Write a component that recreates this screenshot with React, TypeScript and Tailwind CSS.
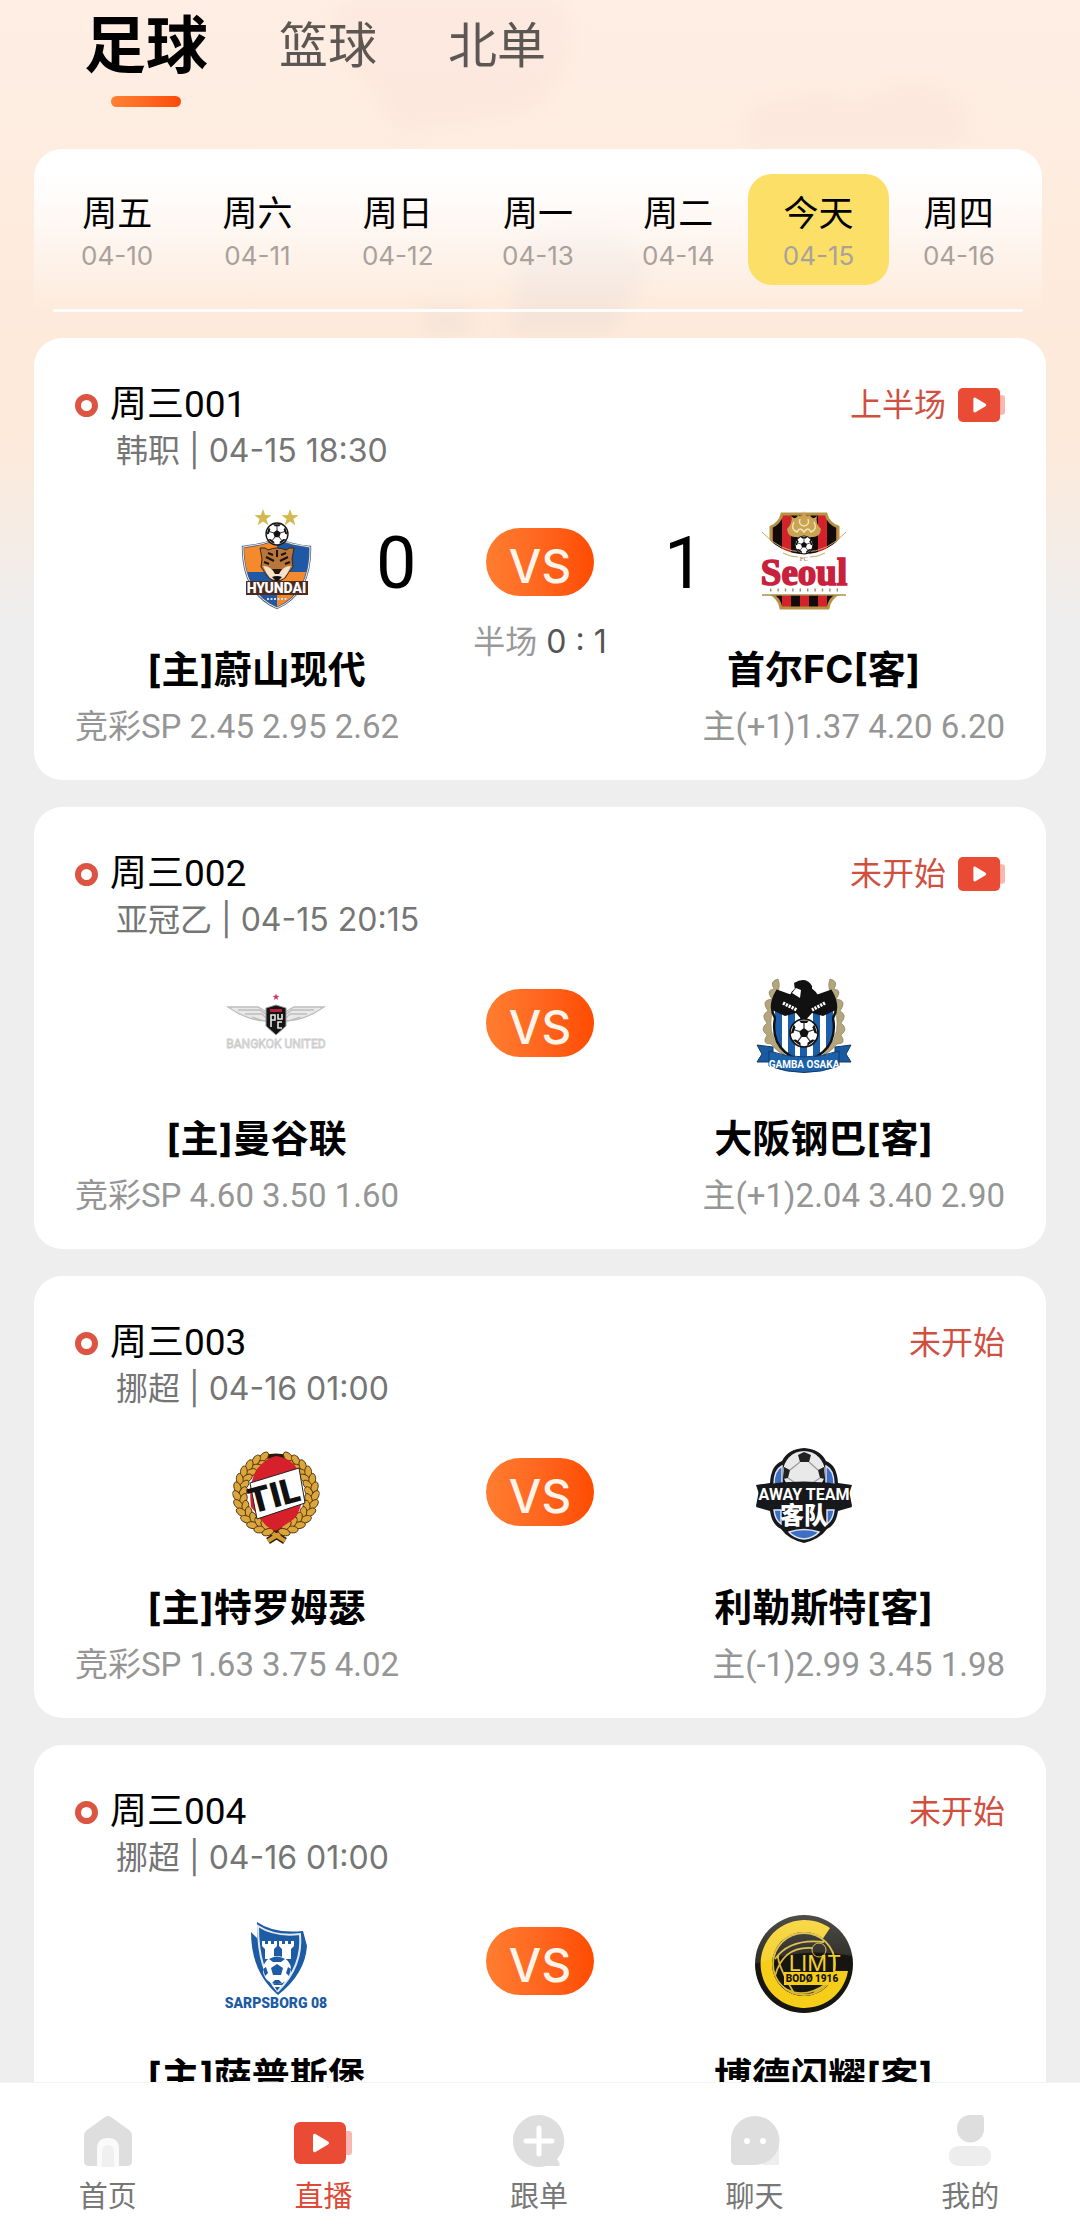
import React from "react";

const FONT = "font-['Roboto','Noto_Sans_CJK_SC',sans-serif]";

function Ball({ x, y, r }: { x: number; y: number; r: number }) {
  const angles = [-90, -18, 54, 126, 198];
  const pt = (a: number, d: number) =>
    `${x + Math.cos((a * Math.PI) / 180) * d},${y + Math.sin((a * Math.PI) / 180) * d}`;
  return (
    <g>
      <circle cx={x} cy={y} r={r} fill="#fff" stroke="#111" strokeWidth={r * 0.12} />
      <polygon points={angles.map((a) => pt(a, r * 0.36)).join(" ")} fill="#111" />
      {angles.map((a) => (
        <g key={a}>
          <polyline points={`${pt(a, r * 0.3)} ${pt(a, r * 0.75)}`} stroke="#333" strokeWidth={r * 0.09} />
          <polygon points={`${pt(a - 22, r * 0.96)} ${pt(a - 16, r * 0.74)} ${pt(a + 16, r * 0.74)} ${pt(a + 22, r * 0.96)}`} fill="#111" />
        </g>
      ))}
    </g>
  );
}

function Star({ x, y, r, fill }: { x: number; y: number; r: number; fill: string }) {
  const points = Array.from({ length: 10 }, (_, i) => {
    const d = i % 2 ? r * 0.4 : r;
    const a = ((i * 36 - 90) * Math.PI) / 180;
    return `${x + Math.cos(a) * d},${y + Math.sin(a) * d}`;
  }).join(" ");
  return <polygon points={points} fill={fill} />;
}

function Crest({ label, children }: { label: string; children: React.ReactNode }) {
  return (
    <svg viewBox="0 0 100 100" role="img" aria-label={label} className="size-[100px] shrink-0 overflow-visible">
      {children}
    </svg>
  );
}

function UlsanCrest() {
  const shield = "M17 38Q36 36 51 30Q66 36 84 38Q85 84 51 99Q17 84 17 38Z";
  return (
    <Crest label="蔚山现代">
      <clipPath id="ulsan">
        <path d={shield} />
      </clipPath>
      <Star x={37} y={9} r={9} fill="#d3b94f" />
      <Star x={64} y={9} r={9} fill="#d3b94f" />
      <g clipPath="url(#ulsan)">
        <rect x="15" y="28" width="36" height="35" fill="#f58a2c" />
        <rect x="51" y="28" width="36" height="35" fill="#1f59a5" />
        <rect x="15" y="63" width="36" height="38" fill="#1f59a5" />
        <rect x="51" y="63" width="36" height="38" fill="#f58a2c" />
      </g>
      <path d={shield} fill="none" stroke="#4a5c78" strokeWidth="2.4" />
      <path d={shield} fill="none" stroke="#e9edf2" strokeWidth="1" />
      <Ball x={51} y={25} r={11} />
      <path d="M34 39Q40 38 42 41Q51 37 60 41Q63 38 68 39L66 50L67 58Q62 64 59 69Q51 75 43 69Q39 64 35 58L36 50Z" fill="#b9763a" stroke="#3a2413" strokeWidth="1" />
      <path d="M37 57Q43 57 46 61L51 64L56 61Q59 57 65 57Q62 64 58 69Q51 73 44 69Q40 64 37 57Z" fill="#f4e3ca" />
      <path d="M40 48L48 52M62 48L54 52M42 44L47 46M60 44L55 46M51 41V48M38 53L43 55M64 53L59 55" stroke="#1c120b" strokeWidth="2" />
      <path d="M46 60H56L53 65H49Z" fill="#29170e" />
      <path d="M46 68Q51 66 56 68L51 73Z" fill="#111" />
      <path d="M20 72H82V86H20Z" fill="#4b2a20" />
      <text x="50.5" y="84" textAnchor="middle" fontSize="14" fontWeight="900" fill="#fff" className="font-['Roboto',sans-serif]">HYUNDAI</text>
      <path d="M41 90H61" stroke="#d7dce5" strokeWidth="2" strokeDasharray="2 1.5" />
    </Crest>
  );
}

function SeoulCrest() {
  const shield = "M28 5H72Q74 14 84 18V85Q76 89 74 99H27Q25 89 17 85V18Q26 14 28 5Z";
  return (
    <Crest label="首尔FC">
      <clipPath id="seoul">
        <path d={shield} />
      </clipPath>
      <g clipPath="url(#seoul)">
        <rect x="15" y="4" width="72" height="96" fill="#d3222a" />
        {[19, 37, 55, 73].map((x) => (
          <rect key={x} x={x} y="4" width="9" height="96" fill="#130b0b" />
        ))}
      </g>
      <path d={shield} fill="none" stroke="#b59445" strokeWidth="3" />
      <path d="M37 7Q42 12 44 6Q48 10 50 2Q52 10 56 6Q58 12 63 7Q61 14 67 20Q66 29 57 28L50 32L43 28Q34 29 33 20Q39 14 37 7Z" fill="#c9a452" />
      <path d="M40 13Q36 20 43 23Q46 17 50 23Q54 17 57 23Q64 20 60 13M46 10Q44 16 50 17Q56 16 54 10" fill="none" stroke="#f4e5bb" strokeWidth="1.4" />
      <path d="M8 23Q26 45 50 45Q74 45 92 23V86H8Z" fill="#fff" />
      <path d="M8 23Q26 43 50 43Q74 43 92 23" fill="none" stroke="#c6a85e" strokeWidth="1" />
      <Ball x={50} y={36} r={9} />
      <path d="M29 44Q36 48 44 48M56 48Q64 48 71 44" fill="none" stroke="#c6a85e" strokeWidth="1" />
      <text x="50" y="52" textAnchor="middle" fontSize="7" fill="#8d7336" className="font-['Liberation_Serif',serif]">FC</text>
      <text x="50" y="76" textAnchor="middle" fontSize="37" fontWeight="700" fill="#c9203c" stroke="#c9203c" strokeWidth="1.6" className="font-['Liberation_Serif',serif]">Seoul</text>
      <path d="M16 81H86" stroke="#9a8b60" strokeWidth="3" strokeDasharray="1.4 6" />
      <path d="M8 86H92" stroke="#a89152" strokeWidth="1.6" />
    </Crest>
  );
}

function BangkokCrest() {
  const wing = "M40 43Q20 42 2 29H32L41 34M12 32H34L41 37M19 36H36L41 41M26 39L41 44";
  return (
    <Crest label="曼谷联">
      <Star x={50} y={19} r={3.6} fill="#d6355a" />
      <path d={wing} fill="#e8e8e8" stroke="#bdbdbd" strokeWidth="1.3" />
      <path d={wing} transform="translate(100 0) scale(-1 1)" fill="#e8e8e8" stroke="#bdbdbd" strokeWidth="1.3" />
      <path d="M40 30L50 27L60 30V48L50 57L40 48Z" fill="#151515" stroke="#999" strokeWidth="1" />
      <path d="M44 31H56V34H44Z" fill="#b91f3b" />
      <path d="M45 49V37H49V42H45M52 36V41H56V36M56 44H52V50H56" fill="none" stroke="#e8e8e8" strokeWidth="1.6" />
      <text x="50" y="70" textAnchor="middle" fontSize="12" fill="#f4f4f4" stroke="#cccccc" strokeWidth="0.8" className="font-['Roboto',sans-serif]">BANGKOK UNITED</text>
    </Crest>
  );
}

function GambaCrest() {
  const shield = "M23 13L37 18Q40 9 50 10Q58 9 63 18L77 13Q86 28 79 40Q83 62 69 74L50 88L31 74Q17 62 21 40Q14 28 23 13Z";
  const laurel = "M24 1Q15 3 20 11Q11 12 18 21Q6 22 14 33Q6 37 13 45Q5 51 13 57Q7 66 17 66Q23 74 32 78L24 68Q14 54 18 35Q19 23 23 16Q27 8 24 1Z";
  return (
    <Crest label="大阪钢巴">
      <clipPath id="gamba">
        <path d={shield} />
      </clipPath>
      <path d={laurel} fill="#b3a67d" stroke="#857a58" strokeWidth="0.6" />
      <path d={laurel} transform="translate(100 0) scale(-1 1)" fill="#b3a67d" stroke="#857a58" strokeWidth="0.6" />
      <g clipPath="url(#gamba)">
        <rect x="14" y="8" width="72" height="82" fill="#fff" />
        {[21, 34, 46, 59, 72].map((x) => (
          <rect key={x} x={x} y="30" width="7" height="60" fill="#1b5ea9" />
        ))}
        <path d="M14 8H86V30L69 38L58 35L50 44L42 35L31 38L14 30Z" fill="#111" />
      </g>
      <path d={shield} fill="none" stroke="#111" strokeWidth="2.4" />
      <path d="M40 5Q52 -2 58 8V24L53 34L47 22Q50 15 47 11L41 12Z" fill="#111" />
      <path d="M38 15L42 10L47 12L46 20Z" fill="#fff" />
      <path d="M29 25L43 32M71 25L58 32" stroke="#fff" strokeWidth="3.4" strokeDasharray="2.2 1" />
      <Ball x={50} y={55} r={14} />
      <path d="M3 67L19 69V84H3L8 76ZM97 67L81 69V84H97L92 76Z" fill="#1a5aa0" stroke="#123a68" strokeWidth="1" />
      <path d="M15 73Q50 85 85 73V88Q50 101 15 88Z" fill="#1b62ab" stroke="#123a68" strokeWidth="1" />
      <text x="50" y="90" textAnchor="middle" fontSize="10" fontWeight="700" fill="#fff" className="font-['Roboto',sans-serif]">GAMBA OSAKA</text>
    </Crest>
  );
}

function TromsoCrest() {
  const leaves = Array.from({ length: 26 }, (_, i) => -78 + i * 6.24);
  return (
    <Crest label="特罗姆瑟">
      <circle cx="50" cy="47" r="36" fill="none" stroke="#2a1d08" strokeWidth="9" />
      <path d="M40 82L59 94M61 82L42 94" stroke="#2a1d08" strokeWidth="7" />
      <path d="M40 82L59 94M61 82L42 94" stroke="#d39b32" strokeWidth="4" />
      {leaves.map((a, i) => (
        <g key={a}>
          <ellipse cx="0" cy="0" rx="3.4" ry="6" fill="#dda63c" stroke="#4a330d" strokeWidth="0.9" transform={`rotate(${a} 50 47) translate(${i % 2 ? 89 : 83} 47) rotate(${i % 2 ? 28 : -28})`} />
          <ellipse cx="0" cy="0" rx="3.4" ry="6" fill="#dda63c" stroke="#4a330d" strokeWidth="0.9" transform={`rotate(${-a} 50 47) translate(${i % 2 ? 11 : 17} 47) rotate(${i % 2 ? -28 : 28})`} />
        </g>
      ))}
      <path d="M50 9Q66 11 73 25L77 46Q75 70 62 76L50 84Q40 81 35 72L25 60Q22 36 31 22Q40 11 50 9Z" fill="#d6212c" />
      <path d="M24 36L73 21L79 56L31 72Z" fill="#fff" stroke="#222" strokeWidth="1" />
      <g transform="translate(51 60) rotate(-15)">
        <text x="0" y="0" textAnchor="middle" fontSize="35" fontWeight="900" fill="#111" className="font-['Roboto',sans-serif]">TIL</text>
      </g>
    </Crest>
  );
}

function AwayCrest() {
  return (
    <Crest label="利勒斯特">
      <path d="M50 1Q66 2 72 14Q83 18 84 36L98 38L94 50L98 60L84 64Q82 78 73 82Q66 92 50 96Q34 92 27 82Q18 78 16 64L2 60L6 50L2 38L16 36Q17 18 28 14Q34 2 50 1Z" fill="#17181c" />
      <path d="M28 19Q20 23 20 37H28ZM72 19Q80 23 80 37H72ZM20 63Q21 73 27 77V63ZM80 63Q79 73 73 77V63ZM35 85Q50 80 65 85Q60 91 50 92Q40 91 35 85Z" fill="#3d6fc4" stroke="#dfe7f4" strokeWidth="1.4" />
      <circle cx="50" cy="25" r="21" fill="#e9e9e9" />
      <path d="M44 8L50 5L57 8L55 15H46ZM30 20L36 23L34 31L29 32ZM70 20L64 23L66 31L71 32ZM43 37L41 45H59L57 37Z" fill="#222" />
      <path d="M46 15L36 23M55 15L64 23M34 31L43 37L57 37L66 31" fill="none" stroke="#999" strokeWidth="1.2" />
      <path d="M6 38Q50 31 94 38L98 59Q50 49 2 59Z" fill="#17181c" />
      <text x="50" y="53" textAnchor="middle" fontSize="16" fontWeight="700" fill="#fff" className="font-['Roboto',sans-serif]">AWAY TEAM</text>
      <text x="50" y="77" textAnchor="middle" fontSize="24" fontWeight="900" fill="#fff" className="font-['Noto_Sans_CJK_SC',sans-serif]">客队</text>
    </Crest>
  );
}

function SarpsborgCrest() {
  return (
    <Crest label="萨普斯堡">
      <path d="M31 6Q48 18 77 15L81 30Q79 58 52 79Q25 56 25 16L31 22Z" fill="#1d5ba4" />
      <path d="M32 10Q49 21 74 18Q77 50 52 75Q32 55 32 10Z" fill="#1d5ba4" stroke="#dfe9f4" strokeWidth="2" />
      <path d="M36 25H39V28H42V25H45V28H48V25H51V30L48 33V43H39V33L36 30ZM53 25H56V28H59V25H62V28H65V25H68V30L65 33V43H56V33L53 30Z" fill="#fff" />
      <circle cx="51" cy="54" r="14" fill="#fff" />
      <path d="M51 48L57 52L55 59H47L45 52ZM43 43Q51 38 59 43L55 46H47ZM37 53L40 51L42 57L39 60ZM65 53L62 51L60 57L63 60ZM46 67L49 64H53L56 67Q51 69 46 67Z" fill="#1d5ba4" />
      <path d="M46 69H56L51 76Z" fill="#fff" />
      <path d="M49 71H54L51 75Z" fill="#1d5ba4" />
      <text x="50" y="92" textAnchor="middle" fontSize="14" fontWeight="900" fill="#1d5ba4" className="font-['Roboto',sans-serif]">SARPSBORG 08</text>
    </Crest>
  );
}

function BodoCrest() {
  return (
    <Crest label="博德闪耀">
      <defs>
        <linearGradient id="bodo-gloss" x1="0" y1="0" x2="0" y2="1">
          <stop offset="0" stopColor="#fff" stopOpacity="0.25" />
          <stop offset="1" stopColor="#fff" stopOpacity="0.1" />
        </linearGradient>
      </defs>
      <circle cx="50" cy="48" r="49" fill="#17150f" />
      <path d="M76 12A44 44 0 1 0 94 55H80A31 31 0 1 1 68 24Z" fill="#f6cd18" />
      <circle cx="50" cy="48" r="32" fill="#17150f" />
      <g fill="none" stroke="#d8b936" strokeWidth="1.8">
        <circle cx="50" cy="48" r="31" />
        <path d="M21 43Q36 22 70 26M21 60Q30 26 66 33M40 77Q24 50 24 40M60 77Q77 66 79 58M30 72Q50 84 72 68" />
      </g>
      <circle cx="65" cy="34" r="7" fill="#17150f" stroke="#d8b936" strokeWidth="1" />
      <text x="61" y="55" textAnchor="middle" fontSize="22" fill="#f0cf2e" className="font-['Inter',sans-serif]">LIMT</text>
      <rect x="30" y="56" width="57" height="13" fill="#f6cd18" />
      <text x="58" y="66" textAnchor="middle" fontSize="10" fontWeight="900" fill="#17150f" className="font-['Roboto',sans-serif]">BODØ 1916</text>
      <path d="M1 48A49 49 0 0 1 99 40Q50 30 1 48Z" fill="url(#bodo-gloss)" />
    </Crest>
  );
}

function PlayIcon({ className }: { className: string }) {
  return (
    <svg viewBox="0 0 58 42" className={className} aria-hidden="true">
      <rect x="44" y="9" width="14" height="24" rx="3" fill="#f6b8b0" />
      <rect x="0" y="0" width="52" height="42" rx="6" fill="#e94b35" />
      <path d="M19 13.5Q19 11 21.500 12L34 19.500Q36 21 34 22.500L21.500 30Q19 31 19 28.500Z" fill="#fff" />
    </svg>
  );
}

type Match = {
  id: string;
  league: string;
  time: string;
  status: string;
  live?: boolean;
  score?: [string, string];
  half?: string;
  home: string;
  away: string;
  homeOdds: string;
  awayOdds: string;
  homeCrest: React.ReactNode;
  awayCrest: React.ReactNode;
};

const matches: Match[] = [
  { id: "周三001", league: "韩职", time: "04-15 18:30", status: "上半场", live: true, score: ["0", "1"], half: "0 : 1", home: "蔚山现代", away: "首尔FC", homeOdds: "竞彩SP 2.45 2.95 2.62", awayOdds: "主(+1)1.37 4.20 6.20", homeCrest: <UlsanCrest />, awayCrest: <SeoulCrest /> },
  { id: "周三002", league: "亚冠乙", time: "04-15 20:15", status: "未开始", live: true, home: "曼谷联", away: "大阪钢巴", homeOdds: "竞彩SP 4.60 3.50 1.60", awayOdds: "主(+1)2.04 3.40 2.90", homeCrest: <BangkokCrest />, awayCrest: <GambaCrest /> },
  { id: "周三003", league: "挪超", time: "04-16 01:00", status: "未开始", home: "特罗姆瑟", away: "利勒斯特", homeOdds: "竞彩SP 1.63 3.75 4.02", awayOdds: "主(-1)2.99 3.45 1.98", homeCrest: <TromsoCrest />, awayCrest: <AwayCrest /> },
  { id: "周三004", league: "挪超", time: "04-16 01:00", status: "未开始", home: "萨普斯堡", away: "博德闪耀", homeOdds: "", awayOdds: "", homeCrest: <SarpsborgCrest />, awayCrest: <BodoCrest /> },
];

function MatchCard({ m }: { m: Match }) {
  return (
    <article className="min-h-[442px] shrink-0 rounded-[28px] bg-white px-[41px] pt-[43px] pb-[31px]">
      <div className="flex items-start justify-between">
        <div>
          <h2 className="flex h-12 items-center gap-3 text-[37px] leading-[48px] text-black">
            <span className="size-[23px] rounded-full border-[6px] border-[#dc5543]" />
            {m.id}
          </h2>
          <p className="ml-[41px] h-11 font-['Inter','Noto_Sans_CJK_SC',sans-serif] text-[32px] leading-[44px] text-[#757575]">
            {m.league} | {m.time}
          </p>
        </div>
        <div className="flex h-12 items-center gap-3 text-[32px] text-[#d0503f]">
          {m.status}
          {m.live && <PlayIcon className="h-[34px] w-[47px]" />}
        </div>
      </div>

      <div className="mt-9 grid grid-cols-[16fr_9fr_16fr]">
        <div className="flex h-[100px] items-center justify-end gap-[50px] pr-[22px]">
          {m.homeCrest}
          <span className="w-10 pt-2.5 text-center text-[72px] leading-none text-black">{m.score?.[0]}</span>
        </div>
        <div className="flex h-[100px] flex-col items-center pt-[11px]">
          <span className={`flex h-[68px] w-[108px] shrink-0 items-center justify-center rounded-full bg-linear-to-r from-[#ff7d30] to-[#ff4b00] pt-2 font-['Inter',sans-serif] text-[46px] leading-none font-medium text-[#fff4ea] ${m.half ? "mt-2" : ""}`}>
            VS
          </span>
          {m.half && (
            <p className="mt-6 shrink-0 font-['Inter','Noto_Sans_CJK_SC',sans-serif] text-[32px] leading-[44px] whitespace-nowrap text-[#999]">
              半场 <span className="text-[#555]">{m.half}</span>
            </p>
          )}
        </div>
        <div className="flex h-[100px] items-center gap-[50px] pl-[22px]">
          <span className="w-10 pt-2.5 text-center text-[72px] leading-none text-black">{m.score?.[1]}</span>
          {m.awayCrest}
        </div>
      </div>

      <div className="mt-[34px] grid grid-cols-[16fr_9fr_16fr] text-center font-['Inter','Noto_Sans_CJK_SC',sans-serif] text-[38px] leading-[52px] font-bold whitespace-nowrap text-black">
        <h3>[主]{m.home}</h3>
        <h3 className="col-start-3">{m.away}[客]</h3>
      </div>

      {m.homeOdds && (
        <div className="mt-[10px] flex justify-between text-[33px] leading-[44px] whitespace-nowrap text-[#959595]">
          <p>{m.homeOdds}</p>
          <p>{m.awayOdds}</p>
        </div>
      )}
    </article>
  );
}

const days = [
  ["周五", "04-10"],
  ["周六", "04-11"],
  ["周日", "04-12"],
  ["周一", "04-13"],
  ["周二", "04-14"],
  ["今天", "04-15"],
  ["周四", "04-16"],
];

const navItems = [
  {
    label: "首页",
    icon: (
      <svg viewBox="0 0 52 52" className="h-[52px]" aria-hidden="true">
        <path d="M23 2Q26 0 29 2L47 15Q50 17 50 21V46Q50 51 45 51H7Q2 51 2 46V21Q2 17 5 15Z" fill="#dedede" />
        <path d="M15 52V34Q15 23 26 23Q37 23 37 34V52Z" fill="#fafafa" />
        <path d="M20 52V38Q20 30 26 30Q32 30 32 38V52Z" fill="#f0f0f0" />
      </svg>
    ),
  },
  { label: "直播", active: true, icon: <PlayIcon className="mt-1 h-[42px] w-[58px]" /> },
  {
    label: "跟单",
    icon: (
      <svg viewBox="0 0 52 52" className="h-[52px]" aria-hidden="true">
        <path d="M26 0A26 26 0 1 0 33 51H46Q48 49 44 44A26 26 0 0 0 26 0Z" fill="#dedede" />
        <path d="M26 13V39M13 26H39" stroke="#fff" strokeWidth="5" strokeLinecap="round" />
      </svg>
    ),
  },
  {
    label: "聊天",
    icon: (
      <svg viewBox="0 0 52 52" className="h-[52px]" aria-hidden="true">
        <path d="M34 50H50V30Z" fill="#eeeeee" />
        <path d="M26 1A24 24 0 0 0 2 25V45Q2 50 7 50H26A24.500 24.500 0 0 0 26 1Z" fill="#dedede" />
        <circle cx="18" cy="26" r="3" fill="#fff" />
        <circle cx="34" cy="26" r="3" fill="#fff" />
      </svg>
    ),
  },
  {
    label: "我的",
    icon: (
      <svg viewBox="0 0 52 52" className="h-[52px]" aria-hidden="true">
        <path d="M25 0H37Q40 0 40 4V14A13.500 13.500 0 0 1 13 14Q13 2 25 0Z" fill="#dedede" />
        <rect x="5" y="31" width="42" height="20" rx="9" fill="#ededed" />
      </svg>
    ),
  },
];

export default function App() {
  return (
    <div className={`flex h-screen flex-col overflow-hidden bg-[#eeeeee] bg-[linear-gradient(#feeee4_0px,#fdeadb_330px,#fdeadb_440px,#eeeeee_620px)] ${FONT}`}>
      <header className="relative shrink-0 pb-[26px]">
        <svg viewBox="0 0 1080 340" className="pointer-events-none absolute inset-x-0 top-0 w-full" aria-hidden="true">
          <defs>
            <filter id="haze">
              <feGaussianBlur stdDeviation="9" />
            </filter>
          </defs>
          <g filter="url(#haze)" fill="#f3cfc4" fillOpacity="0.14">
            <path d="M340 0H560Q590 60 530 110L400 130Q360 70 330 40Z" />
            <path d="M750 110L830 90L850 105L900 85Q960 80 970 130L940 149H750Z" />
            <path d="M520 240Q620 200 650 270L610 335H510ZM425 305H470V335H425Z" fill="#c9c0cc" />
          </g>
        </svg>

        <nav className="relative flex h-[149px] items-start gap-[71px] pl-[84px]" aria-label="项目">
          <button className="flex flex-col items-center pt-[13px] text-[62px] leading-[68px] font-bold text-black">
            足球
            <span className="mt-[15px] h-[11px] w-[70px] rounded-full bg-linear-to-r from-[#ff8133] to-[#fb4a05]" />
          </button>
          <button className="pt-[13px] text-[49px] leading-[68px] text-[#5c5753]">篮球</button>
          <button className="pt-[13px] text-[49px] leading-[68px] text-[#5c5753]">北单</button>
        </nav>

        <div className="relative mr-[38px] ml-[34px] rounded-t-[28px] bg-linear-to-b from-white from-15% to-white/0 px-[13px] pt-[25px]">
          <div className="grid grid-cols-7">
            {days.map(([name, date]) => (
              <button
                key={date}
                className={
                  name === "今天"
                    ? "flex h-[111px] flex-col items-center rounded-3xl bg-[#fcdf67] pt-[17px]"
                    : "flex h-[111px] flex-col items-center pt-[17px]"
                }
              >
                <span className="text-[35px] leading-[48px] text-black">{name}</span>
                <span className="font-['Inter',sans-serif] text-[26px] leading-[34px] text-[#a8a19c]">{date}</span>
              </button>
            ))}
          </div>
          <div className="mx-1.5 mt-6 h-[3px] rounded-full bg-white/90" />
        </div>
      </header>

      <main className="flex min-h-0 flex-1 flex-col gap-[27px] overflow-hidden px-[34px]">
        {matches.map((m) => (
          <MatchCard key={m.id} m={m} />
        ))}
      </main>

      <nav className="flex h-[158px] shrink-0 border-t border-[#f4f4f4] bg-white pr-0.5" aria-label="主导航">
        {navItems.map((item) => (
          <a
            key={item.label}
            href="#"
            className={item.active ? "flex flex-1 flex-col items-center pt-8 text-[#dc4a36]" : "flex flex-1 flex-col items-center pt-8 text-[#777777]"}
          >
            <span className="flex h-[52px] items-center">{item.icon}</span>
            <span className="mt-2.5 text-[29px] leading-[40px]">{item.label}</span>
          </a>
        ))}
      </nav>
    </div>
  );
}
